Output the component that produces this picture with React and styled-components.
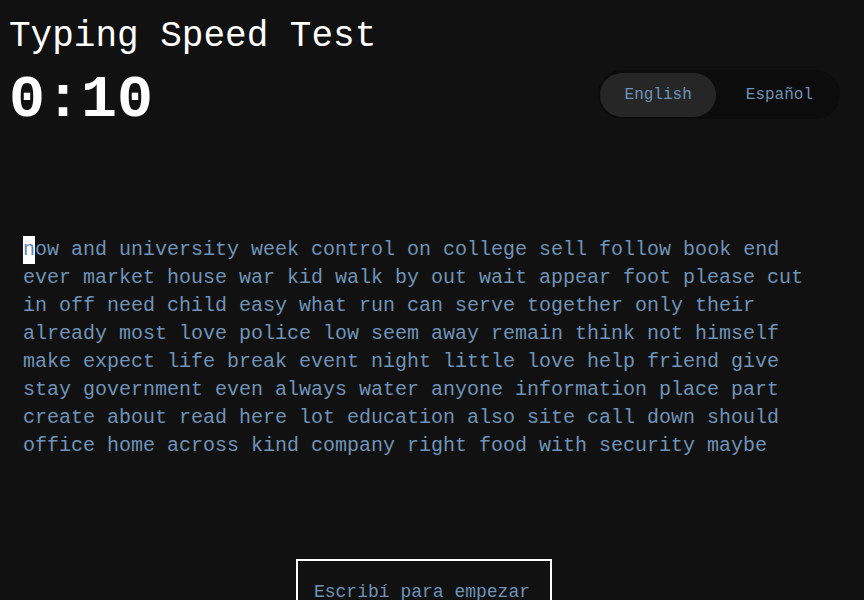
import React from "react";
import styled, { createGlobalStyle } from "styled-components";

const GlobalStyle = createGlobalStyle`
  html, body {
    margin: 0;
    padding: 0;
    background: #111111;
    height: 100%;
    overflow: hidden;
  }
  body {
    font-family: "Liberation Mono", "DejaVu Sans Mono", monospace;
    color: #ffffff;
  }
`;

const Page = styled.div`
  display: flex;
  flex-direction: column;
  padding: 17px 24px 0 9px;
`;

const Title = styled.h1`
  margin: 0;
  font-size: 36px;
  font-weight: 400;
  line-height: 40px;
  color: #ffffff;
`;

const TopRow = styled.div`
  display: flex;
  align-items: center;
  justify-content: space-between;
  margin-top: 7px;
`;

const Timer = styled.div`
  font-size: 60px;
  font-weight: 700;
  line-height: 72px;
  color: #ffffff;
`;

const LangToggle = styled.div`
  display: flex;
  align-items: center;
  background: #0c0c0c;
  border-radius: 24px;
  padding: 3px 0 2px 2px;
  margin-top: -12px;
`;

const LangButton = styled.button`
  border: none;
  outline: none;
  font-family: inherit;
  font-size: 16px;
  height: 44px;
  border-radius: 22px;
  padding: 0 ${(p) => (p.$active ? "24px" : "27px")} 0
    ${(p) => (p.$active ? "25px" : "30px")};
  background: ${(p) => (p.$active ? "#262626" : "transparent")};
  color: #6f93b8;
  cursor: pointer;
`;

const TextArea = styled.div`
  display: flex;
  flex-direction: column;
  align-items: center;
  width: 802px;
  margin: 100px 0 0 14px;
`;

const Words = styled.p`
  margin: 0;
  width: 100%;
  font-size: 20px;
  line-height: 28px;
  color: #6f93b8;
`;

const Cursor = styled.span`
  display: inline-block;
  line-height: 28px;
  height: 28px;
  vertical-align: top;
  background: #ffffff;
  color: #5f86b0;
`;

const StartButton = styled.button`
  margin-top: 99px;
  background: transparent;
  border: 2px solid #ffffff;
  font-family: inherit;
  font-size: 18px;
  color: #6f93b8;
  padding: 20px 20px 20px 16px;
  line-height: 22px;
  cursor: pointer;
`;

const text =
  "now and university week control on college sell follow book end ever market house war kid walk by out wait appear foot please cut in off need child easy what run can serve together only their already most love police low seem away remain think not himself make expect life break event night little love help friend give stay government even always water anyone information place part create about read here lot education also site call down should office home across kind company right food with security maybe";

export default function App() {
  return (
    <>
      <GlobalStyle />
      <Page>
        <Title>Typing Speed Test</Title>
        <TopRow>
          <Timer>0:10</Timer>
          <LangToggle>
            <LangButton $active>English</LangButton>
            <LangButton>Español</LangButton>
          </LangToggle>
        </TopRow>
        <TextArea>
          <Words>
            <Cursor>{text[0]}</Cursor>
            {text.slice(1)}
          </Words>
          <StartButton>Escribí para empezar</StartButton>
        </TextArea>
      </Page>
    </>
  );
}
